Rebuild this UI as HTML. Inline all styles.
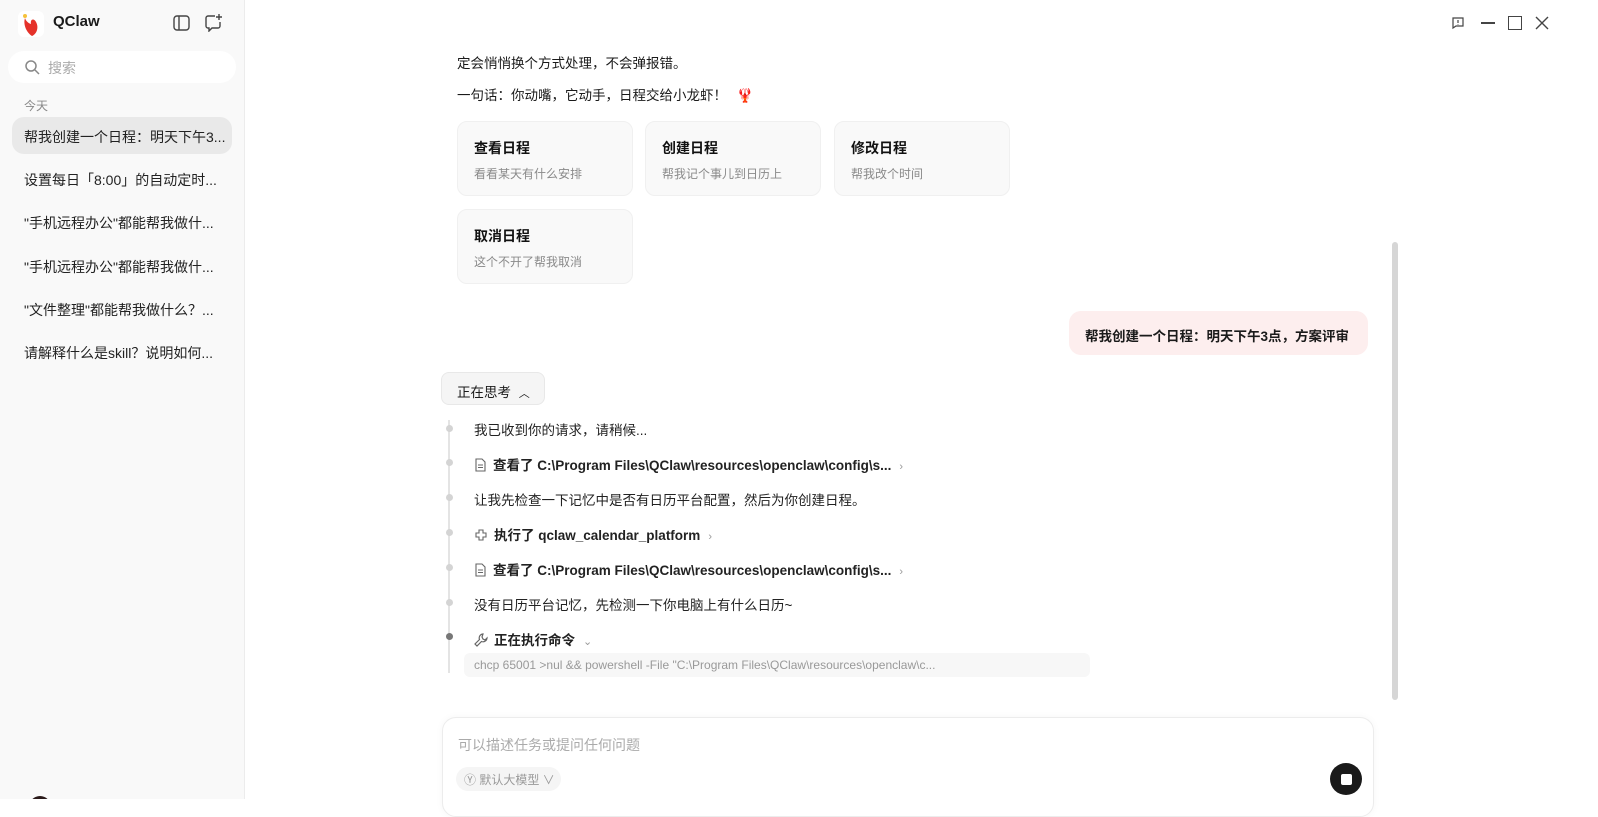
<!DOCTYPE html>
<html><head><meta charset="utf-8"><style>
*{margin:0;padding:0;box-sizing:border-box}
body{width:1598px;height:799px;overflow:hidden;font-family:"Liberation Sans","Noto Sans CJK SC",sans-serif;background:#fff;position:relative;color:#1a1a1a}
.abs{position:absolute}
#side{left:0;top:0;width:245px;height:799px;background:#f9f9f9;border-right:1px solid #ececec;overflow:hidden}
.it{position:absolute;left:24px;font-size:14px;color:#222;white-space:nowrap}
.card{position:absolute;width:176px;height:75px;background:#f9f9f9;border:1px solid #f0f0f0;border-radius:10px}
.card b{position:absolute;left:16px;top:16px;font-size:14px;font-weight:600;color:#111}
.card span{position:absolute;left:16px;top:43px;font-size:12px;color:#8a8a8a}
.tl{position:absolute;left:474px;font-size:13.5px;color:#222;white-space:nowrap}
.dot{position:absolute;left:446px;width:7px;height:7px;border-radius:50%;background:#d4d4d4}
.tl b{font-weight:600}
.tl svg{vertical-align:-2px;margin-right:6px}
.chev{color:#999;font-size:11px;margin-left:8px}
</style></head><body>
<div id="side" class="abs">
 <div class="abs" style="left:18px;top:11px;width:26px;height:26px;background:#fff;border-radius:6px"></div>
 <svg class="abs" style="left:20px;top:12px" width="22" height="26" viewBox="0 0 22 26"><path d="M5 6 C3 12 6 20 12 24 C17 22 19 15 16 10 C14 6 10 7 11 12 C8 11 6 9 5 6Z" fill="#e5322a"/><circle cx="5" cy="4" r="2" fill="#f5c23a"/></svg>
 <div class="abs" style="left:53px;top:13px;font-size:15px;font-weight:600">QClaw</div>
 <svg class="abs" style="left:173px;top:15px" width="17" height="16" viewBox="0 0 17 16" fill="none" stroke="#444" stroke-width="1.4"><rect x="1" y="1" width="15" height="14" rx="3"/><line x1="6" y1="1" x2="6" y2="15"/></svg>
 <svg class="abs" style="left:204px;top:13px" width="19" height="19" viewBox="0 0 19 19" fill="none" stroke="#444" stroke-width="1.4"><path d="M11 3H4a2 2 0 0 0-2 2v8a2 2 0 0 0 2 2h1v3l3-3h6a2 2 0 0 0 2-2V9"/><path d="M15 1v6M12 4h6"/></svg>
 <div class="abs" style="left:8px;top:51px;width:228px;height:32px;background:#fff;border-radius:16px"></div>
 <svg class="abs" style="left:24px;top:59px" width="16" height="16" viewBox="0 0 16 16" fill="none" stroke="#888" stroke-width="1.5"><circle cx="7" cy="7" r="5"/><path d="M11 11l4 4"/></svg>
 <div class="abs" style="left:48px;top:58px;font-size:14px;color:#aaa">搜索</div>
 <div class="abs" style="left:24px;top:97px;font-size:12px;color:#888">今天</div>
 <div class="abs" style="left:12px;top:117px;width:220px;height:37px;background:#e9e9e9;border-radius:12px"></div>
 <div class="it" style="top:127px">帮我创建一个日程：明天下午3...</div>
 <div class="it" style="top:170px">设置每日「8:00」的自动定时...</div>
 <div class="it" style="top:213px">"手机远程办公"都能帮我做什...</div>
 <div class="it" style="top:257px">"手机远程办公"都能帮我做什...</div>
 <div class="it" style="top:300px">"文件整理"都能帮我做什么？...</div>
 <div class="it" style="top:343px">请解释什么是skill？说明如何...</div>
 <div class="abs" style="left:29px;top:796px;width:22px;height:22px;border-radius:50%;background:#2a1a1a"></div>
</div>
<svg class="abs" style="left:1451px;top:16px" width="14" height="14" viewBox="0 0 14 14" fill="none" stroke="#444" stroke-width="1.2"><path d="M2 2h10v8H5l-3 2z"/><path d="M7 4v3M7 8.5v.5"/></svg>
<div class="abs" style="left:1481px;top:22px;width:14px;height:1.5px;background:#444"></div>
<div class="abs" style="left:1508px;top:16px;width:14px;height:14px;border:1.5px solid #444"></div>
<svg class="abs" style="left:1535px;top:16px" width="14" height="14" viewBox="0 0 14 14" stroke="#444" stroke-width="1.4"><path d="M1 1l12 12M13 1L1 13"/></svg>

<div class="abs" style="left:457px;top:52px;font-size:13.5px">定会悄悄换个方式处理，不会弹报错。</div>
<div class="abs" style="left:457px;top:84px;font-size:13.5px">一句话：你动嘴，它动手，日程交给小龙虾！ <span style="color:#d33;margin-left:6px">🦞</span></div>
<div class="card" style="left:457px;top:121px"><b>查看日程</b><span>看看某天有什么安排</span></div>
<div class="card" style="left:645px;top:121px"><b>创建日程</b><span>帮我记个事儿到日历上</span></div>
<div class="card" style="left:834px;top:121px"><b>修改日程</b><span>帮我改个时间</span></div>
<div class="card" style="left:457px;top:209px"><b>取消日程</b><span>这个不开了帮我取消</span></div>

<div class="abs" style="left:1069px;top:311px;width:299px;height:44px;background:#fdeeee;border-radius:12px;font-size:13.5px;font-weight:600;padding:14px 0 0 16px">帮我创建一个日程：明天下午3点，方案评审</div>

<div class="abs" style="left:441px;top:372px;width:104px;height:33px;background:#f5f5f5;border:1px solid #e8e8e8;border-radius:8px;font-size:13.5px;padding:8px 0 0 15px">正在思考 <span style="font-size:11px;margin-left:4px">︿</span></div>
<div class="abs" style="left:448px;top:420px;width:2px;height:253px;background:#e4e4e4"></div>
<div class="dot" style="top:425px"></div><div class="dot" style="top:459px"></div><div class="dot" style="top:494px"></div><div class="dot" style="top:529px"></div><div class="dot" style="top:564px"></div><div class="dot" style="top:599px"></div><div class="dot" style="top:633px;background:#777"></div>
<div class="tl" style="top:419px">我已收到你的请求，请稍候...</div>
<div class="tl" style="top:454px"><svg width="13" height="14" viewBox="0 0 13 14" fill="none" stroke="#666" stroke-width="1.1"><path d="M2 1h6l3 3v9H2z"/><path d="M4 7h5M4 9.5h5"/></svg><b>查看了 C:\Program Files\QClaw\resources\openclaw\config\s...</b><span class="chev">›</span></div>
<div class="tl" style="top:489px">让我先检查一下记忆中是否有日历平台配置，然后为你创建日程。</div>
<div class="tl" style="top:524px"><svg width="14" height="14" viewBox="0 0 14 14" fill="none" stroke="#666" stroke-width="1.1"><path d="M5 2h4v3h3v4H9v3H5V9H2V5h3z"/></svg><b>执行了 qclaw_calendar_platform</b><span class="chev">›</span></div>
<div class="tl" style="top:559px"><svg width="13" height="14" viewBox="0 0 13 14" fill="none" stroke="#666" stroke-width="1.1"><path d="M2 1h6l3 3v9H2z"/><path d="M4 7h5M4 9.5h5"/></svg><b>查看了 C:\Program Files\QClaw\resources\openclaw\config\s...</b><span class="chev">›</span></div>
<div class="tl" style="top:594px">没有日历平台记忆，先检测一下你电脑上有什么日历~</div>
<div class="tl" style="top:629px"><svg width="14" height="14" viewBox="0 0 14 14" fill="none" stroke="#666" stroke-width="1.2"><path d="M9 1a4 4 0 0 0-3.5 5.5L1 11l2 2 4.5-4.5A4 4 0 0 0 13 5l-2 2-2-1-1-2z"/></svg><b>正在执行命令</b><span class="chev">⌄</span></div>
<div class="abs" style="left:464px;top:653px;width:626px;height:24px;background:#f7f7f7;border-radius:6px;font-size:12px;color:#999;padding:5px 0 0 10px;white-space:nowrap;overflow:hidden">chcp 65001 &gt;nul &amp;&amp; powershell -File "C:\Program Files\QClaw\resources\openclaw\c...</div>

<div class="abs" style="left:1392px;top:242px;width:6px;height:458px;background:#d6d6d6;border-radius:3px"></div>

<div class="abs" style="left:442px;top:717px;width:932px;height:100px;background:#fff;border:1px solid #ececec;border-radius:14px;box-shadow:0 0 8px rgba(0,0,0,.04)"></div>
<div class="abs" style="left:458px;top:735px;font-size:14px;color:#aaa">可以描述任务或提问任何问题</div>
<div class="abs" style="left:456px;top:767px;width:105px;height:24px;background:#f5f5f5;border-radius:12px;font-size:12px;color:#999;padding:4px 0 0 8px">Ⓨ 默认大模型 ∨</div>
<div class="abs" style="left:1330px;top:763px;width:32px;height:32px;background:#1a1a1a;border-radius:50%"></div>
<div class="abs" style="left:1341px;top:774px;width:11px;height:11px;background:#fff;border-radius:2px"></div>
</body></html>
